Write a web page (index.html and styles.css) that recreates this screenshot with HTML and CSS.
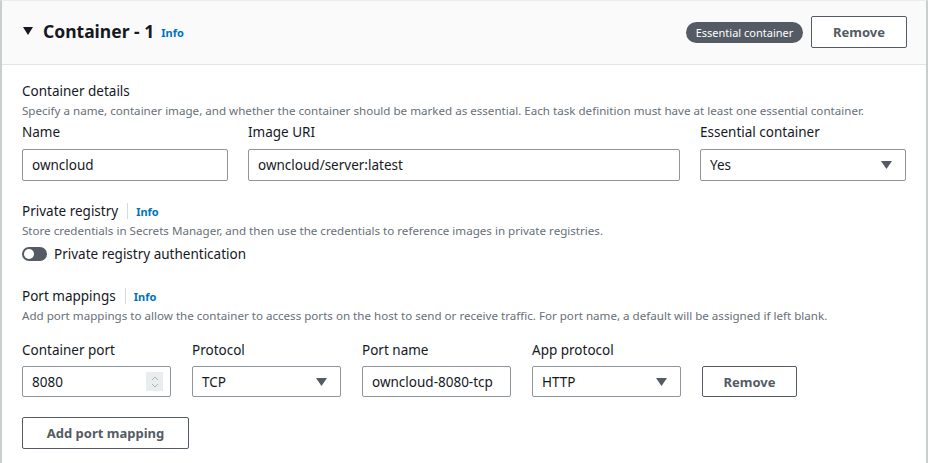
FILE: index.html
```html
<!DOCTYPE html>
<html>
<head>
<meta charset="utf-8">
<link rel="stylesheet" href="styles.css">
</head>
<body>
<div class="card">
  <div class="card-header">
    <div class="title">
      <svg class="caret" width="10" height="8" viewBox="0 0 10 8"><path d="M0 0H10L5 8Z" fill="#16191f"/></svg>
      <h2>Container - 1</h2>
      <a class="info">Info</a>
    </div>
    <div class="actions">
      <span class="badge">Essential container</span>
      <button class="btn btn-remove-top">Remove</button>
    </div>
  </div>
  <div class="card-body">
    <section class="sec">
      <div class="sec-title">Container details</div>
      <div class="desc">Specify a name, container image, and whether the container should be marked as essential. Each task definition must have at least one essential container.</div>
      <div class="grid3">
        <div class="field">
          <label>Name</label>
          <div class="input">owncloud</div>
        </div>
        <div class="field">
          <label>Image URI</label>
          <div class="input">owncloud/server:latest</div>
        </div>
        <div class="field">
          <label>Essential container</label>
          <div class="input select">Yes<svg class="arrow" width="11" height="8" viewBox="0 0 11 8"><path d="M0 0H11L5.5 8Z" fill="#545b64"/></svg></div>
        </div>
      </div>
    </section>

    <section class="sec sec-reg">
      <div class="sec-title with-info"><span>Private registry</span><i class="sep"></i><a class="info">Info</a></div>
      <div class="desc">Store credentials in Secrets Manager, and then use the credentials to reference images in private registries.</div>
      <div class="toggle-row">
        <span class="toggle"><span class="knob"></span></span>
        <span class="toggle-label">Private registry authentication</span>
      </div>
    </section>

    <section class="sec sec-port">
      <div class="sec-title with-info"><span>Port mappings</span><i class="sep"></i><a class="info">Info</a></div>
      <div class="desc">Add port mappings to allow the container to access ports on the host to send or receive traffic. For port name, a default will be assigned if left blank.</div>
      <div class="port-row">
        <div class="field pf">
          <label>Container port</label>
          <div class="input">8080<span class="spin"><svg width="8" height="14" viewBox="0 0 8 14"><path d="M1 5L4 2L7 5M1 9L4 12L7 9" fill="none" stroke="#aab7b8" stroke-width="1"/></svg></span></div>
        </div>
        <div class="field pf">
          <label>Protocol</label>
          <div class="input select">TCP<svg class="arrow" width="11" height="8" viewBox="0 0 11 8"><path d="M0 0H11L5.5 8Z" fill="#545b64"/></svg></div>
        </div>
        <div class="field pf">
          <label>Port name</label>
          <div class="input">owncloud-8080-tcp</div>
        </div>
        <div class="field pf">
          <label>App protocol</label>
          <div class="input select">HTTP<svg class="arrow" width="11" height="8" viewBox="0 0 11 8"><path d="M0 0H11L5.5 8Z" fill="#545b64"/></svg></div>
        </div>
        <button class="btn btn-remove-row">Remove</button>
      </div>
      <button class="btn btn-add">Add port mapping</button>
    </section>
  </div>
</div>
</body>
</html>
```
FILE: styles.css
```css
* { box-sizing: border-box; }
html, body { margin: 0; padding: 0; background: #fff; }
body {
  font-family: "Noto Sans", "Open Sans", sans-serif;
  color: #16191f;
  width: 928px;
  height: 463px;
  overflow: hidden;
}
.card {
  border-left: 2px solid #c9cfd0;
  border-right: 2px solid #c9cfd0;
  border-top: 1px solid #eaeded;
  width: 928px;
  height: 470px;
}
.card-header {
  background: #fafafa;
  height: 64px;
  border-bottom: 1px solid #e3e6e6;
  display: flex;
  align-items: center;
  justify-content: space-between;
  padding: 0 19px 0 20px;
}
.title { display: flex; align-items: center; margin-top: -3px; }
.caret { margin: 0 10px 1px 1px; }
h2 {
  margin: 0;
  font-size: 17.5px;
  font-weight: 700;
}
.info {
  color: #0073bb;
  font-size: 11px;
  font-weight: 700;
  margin-left: 7px;
  margin-top: 3px;
}
.actions { display: flex; align-items: center; gap: 8px; margin-top: -1px; }
.badge {
  background: #545b64;
  color: #fff;
  font-size: 11px;
  border-radius: 11px;
  height: 21px;
  line-height: 21px;
  padding: 0 8px;
  width: 117px;
  text-align: center;
}
.btn {
  font-family: inherit;
  background: #fff;
  border: 1px solid #545b64;
  border-radius: 2px;
  color: #545b64;
  font-weight: 700;
  font-size: 13px;
  padding: 0;
}
.btn-remove-top { width: 96px; height: 32px; }
.card-body { padding: 17px 19px 0 20px; }
.sec-title { font-size: 13.5px; line-height: 19px; }
.desc { font-size: 11.6px; color: #687078; line-height: 16px; margin-top: 2px; }
.grid3 {
  display: grid;
  grid-template-columns: 206px 432px 206px;
  column-gap: 20px;
  margin-top: 4px;
}
.field label { display: block; font-size: 13.5px; line-height: 19px; }
.input {
  margin-top: 7px;
  height: 32px;
  border: 1px solid #8e959d;
  border-radius: 2px;
  font-size: 13.5px;
  line-height: 30px;
  padding: 0 9px;
  display: flex;
  align-items: center;
  justify-content: space-between;
}
.arrow { margin-right: 4px; }
.sec-reg { margin-top: 20px; }
.with-info { display: flex; align-items: center; }
.with-info .info { margin-left: 0; margin-top: 1px; }
.sep { display: inline-block; width: 1px; height: 16px; background: #d5dbdb; margin: 0 8px 0 9px; }
.toggle-row { display: flex; align-items: center; margin-top: 6px; }
.toggle {
  width: 25px; height: 14px; border-radius: 7px; background: #545b64;
  display: inline-flex; align-items: center; padding-left: 2px;
}
.knob { width: 10px; height: 10px; border-radius: 50%; background: #fff; }
.toggle-label { font-size: 13.5px; margin-left: 7px; }
.sec-port { margin-top: 23px; }
.port-row { display: flex; align-items: flex-end; gap: 21px; margin-top: 17px; }
.pf { width: 149px; }
.pf .input { height: 31px; margin-top: 6px; }
.spin {
  background: #eaeded; width: 17px; height: 19px; display: flex; align-items: center; justify-content: center; margin-right: -2px;
}
.btn-remove-row { width: 95px; height: 31px; }
.btn-add { width: 167px; height: 32px; margin-top: 20px; }
```
